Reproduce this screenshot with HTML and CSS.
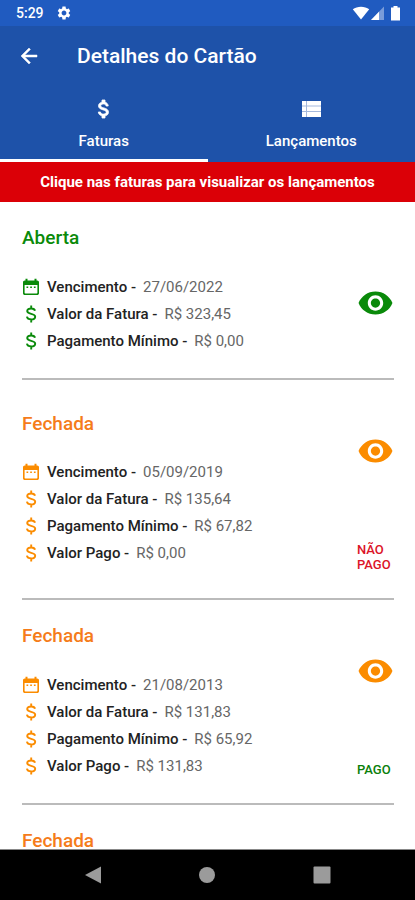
FILE: index.html
```html
<!DOCTYPE html>
<html lang="pt-BR">
<head>
<meta charset="utf-8">
<meta name="viewport" content="width=device-width, initial-scale=1">
<title>Detalhes do Cartão</title>
<link rel="stylesheet" href="styles.css">
</head>
<body>
<svg class="sprite" aria-hidden="true">
  <symbol id="money" viewBox="0 0 24 24"><path d="M11.8 10.9c-2.27-.59-3-1.2-3-2.15 0-1.09 1.01-1.85 2.7-1.85 1.78 0 2.44.85 2.5 2.1h2.21c-.07-1.72-1.12-3.3-3.21-3.81V3h-3v2.16c-1.94.42-3.5 1.68-3.5 3.61 0 2.31 1.91 3.46 4.7 4.13 2.5.6 3 1.48 3 2.41 0 .69-.49 1.79-2.7 1.79-2.06 0-2.87-.92-2.98-2.1h-2.2c.12 2.19 1.76 3.42 3.68 3.83V21h3v-2.15c1.95-.37 3.5-1.5 3.5-3.55 0-2.84-2.43-3.81-4.7-4.4z" stroke="currentColor" stroke-width=".8"/></symbol>
  <symbol id="dollar" viewBox="0 0 18 18"><path d="M13 5.800C12.700 4.200 11.300 3.500 9.200 3.500 6.900 3.500 5.200 4.400 5.200 6.100c0 3.900 8 1.700 8 5.700 0 1.800-1.700 2.700-4 2.700-2.400 0-4-1-4.300-2.800M9.200.4v3.100M9.200 14.500v3.100" fill="none" stroke="currentColor" stroke-width="1.900"/></symbol>
  <symbol id="calendar" viewBox="0 0 18 18"><path fill-rule="evenodd" d="M3.500.8h2v1.700h7V.8h2v1.700h.7c1 0 1.800.8 1.800 1.800v10.900c0 1-.8 1.800-1.800 1.800H2.800C1.800 17 1 16.200 1 15.200V4.300c0-1 .8-1.800 1.800-1.800h.7zM2.600 7v7.700c0 .4.300.7.700.7h11.400c.4 0 .7-.3.700-.7V7z"/><path d="M4.500 8.500h1.700v1.500H4.500zM8.200 8.500h1.700v1.500H8.200zM11.900 8.500h1.700v1.500h-1.700z"/></symbol>
  <symbol id="eye" viewBox="0 0 24 24"><path d="M12 4.500C7 4.500 2.730 7.610 1 12c1.730 4.390 6 7.500 11 7.500s9.270-3.110 11-7.500c-1.730-4.390-6-7.500-11-7.500zM12 17c-2.760 0-5-2.240-5-5s2.240-5 5-5 5 2.240 5 5-2.240 5-5 5zm0-8c-1.660 0-3 1.340-3 3s1.340 3 3 3 3-1.340 3-3-1.340-3-3-3z"/></symbol>
</svg>
<div class="app">
  <div class="status-bar">
    <div class="status-group">
      <span>5:29</span>
      <svg class="icon-gear" viewBox="0 0 24 24"><path d="M19.140 12.940c.04-.3.060-.61.060-.94 0-.32-.02-.64-.07-.94l2.030-1.580c.18-.14.230-.41.120-.61l-1.920-3.320c-.12-.22-.37-.29-.59-.22l-2.390.96c-.5-.38-1.030-.7-1.620-.94l-.36-2.540c-.04-.24-.24-.41-.48-.41h-3.840c-.24 0-.43.170-.47.410l-.36 2.540c-.59.240-1.130.57-1.620.94l-2.390-.96c-.22-.08-.47 0-.59.220L2.740 8.870c-.12.210-.08.470.12.610l2.030 1.580c-.05.3-.09.630-.09.940s.02.640.07.940l-2.030 1.580c-.18.140-.23.410-.12.610l1.920 3.320c.12.220.37.290.59.220l2.390-.96c.5.380 1.030.7 1.620.94l.36 2.540c.05.240.24.410.48.410h3.840c.24 0 .44-.17.470-.41l.36-2.540c.59-.24 1.130-.56 1.620-.94l2.390.96c.22.080.47 0 .59-.22l1.920-3.320c.12-.22.070-.47-.12-.61l-2.010-1.580zM12 15.600c-1.980 0-3.600-1.620-3.600-3.600s1.620-3.600 3.600-3.600 3.600 1.620 3.600 3.600-1.620 3.600-3.600 3.600z"/></svg>
    </div>
    <svg class="icon-signals" viewBox="0 0 50 16"><path d="M.8 4.200C5 .8 13 .8 17.200 4.200L9 14.500z"/><path d="M32 1.500V15H19z" opacity=".4"/><path d="M27 6.700V15h-8z"/><path d="M41.500 1h4v1.500H48V15.500h-9V2.500h2.500z"/></svg>
  </div>
  <header class="app-bar">
    <button class="back" aria-label="Voltar"><svg viewBox="0 0 24 24"><path d="M20 11H7.830l5.590-5.590L12 4l-8 8 8 8 1.410-1.410L7.830 13H20z" stroke="currentColor" stroke-width=".5"/></svg></button>
    <h1>Detalhes do Cartão</h1>
  </header>
  <nav class="tabs">
    <a class="tab active" href="#faturas"><svg viewBox="0 0 24 24"><use href="#money"/></svg>Faturas</a>
    <a class="tab" href="#lancamentos"><svg viewBox="0 0 24 24"><path d="M3 4h19v16H3z" opacity=".6"/><path d="M3 4h4v4.500H3zM8 4h14v4.500H8zM3 9.500h4v4.500H3zM8 9.500h14v4.500H8zM3 15h4v5H3zM8 15h14v5H8z"/></svg>Lançamentos</a>
  </nav>
  <p class="notice">Clique nas faturas para visualizar os lançamentos</p>
  <main class="invoices" id="faturas">
    <section class="invoice open">
      <div class="details">
        <h2>Aberta</h2>
        <ul>
          <li><svg><use href="#calendar"/></svg><b>Vencimento -</b><span>27/06/2022</span></li>
          <li><svg><use href="#dollar"/></svg><b>Valor da Fatura -</b><span>R$ 323,45</span></li>
          <li><svg><use href="#dollar"/></svg><b>Pagamento Mínimo -</b><span>R$ 0,00</span></li>
        </ul>
      </div>
      <div class="actions">
        <button aria-label="Visualizar fatura"><svg><use href="#eye"/></svg></button>
      </div>
    </section>
    <section class="invoice">
      <div class="details">
        <h2>Fechada</h2>
        <ul>
          <li><svg><use href="#calendar"/></svg><b>Vencimento -</b><span>05/09/2019</span></li>
          <li><svg><use href="#dollar"/></svg><b>Valor da Fatura -</b><span>R$ 135,64</span></li>
          <li><svg><use href="#dollar"/></svg><b>Pagamento Mínimo -</b><span>R$ 67,82</span></li>
          <li><svg><use href="#dollar"/></svg><b>Valor Pago -</b><span>R$ 0,00</span></li>
        </ul>
      </div>
      <div class="actions">
        <button aria-label="Visualizar fatura"><svg><use href="#eye"/></svg></button>
        <p class="state unpaid">NÃO PAGO</p>
      </div>
    </section>
    <section class="invoice">
      <div class="details">
        <h2>Fechada</h2>
        <ul>
          <li><svg><use href="#calendar"/></svg><b>Vencimento -</b><span>21/08/2013</span></li>
          <li><svg><use href="#dollar"/></svg><b>Valor da Fatura -</b><span>R$ 131,83</span></li>
          <li><svg><use href="#dollar"/></svg><b>Pagamento Mínimo -</b><span>R$ 65,92</span></li>
          <li><svg><use href="#dollar"/></svg><b>Valor Pago -</b><span>R$ 131,83</span></li>
        </ul>
      </div>
      <div class="actions">
        <button aria-label="Visualizar fatura"><svg><use href="#eye"/></svg></button>
        <p class="state paid">PAGO</p>
      </div>
    </section>
    <section class="invoice">
      <div class="details">
        <h2>Fechada</h2>
      </div>
    </section>
  </main>
  <footer class="system-nav">
    <button aria-label="Voltar"><svg viewBox="0 0 18 18"><path d="M17 .5v17L1 9z"/></svg></button>
    <button aria-label="Início"><svg viewBox="0 0 18 18"><circle cx="9" cy="9" r="8"/></svg></button>
    <button aria-label="Recentes"><svg viewBox="0 0 18 18"><rect x=".5" y=".5" width="17" height="17" rx="1"/></svg></button>
  </footer>
</div>
</body>
</html>
```
FILE: styles.css
```css
* {
  box-sizing: border-box;
  margin: 0;
  padding: 0;
}

body {
  font-family: Roboto, "Liberation Sans", sans-serif;
  background: #fff;
  color: #222;
}

svg {
  display: block;
  fill: currentColor;
}

button {
  border: 0;
  background: none;
  color: inherit;
  cursor: pointer;
}

.sprite {
  display: none;
}

.app {
  display: flex;
  flex-direction: column;
  height: 100vh;
}

.status-bar {
  display: flex;
  flex: none;
  align-items: center;
  justify-content: space-between;
  height: 26px;
  padding: 0 13px 0 16px;
  background: #205bc0;
  color: #fff;
  font-size: 14px;
  font-weight: 500;
}

.status-group {
  display: flex;
  align-items: center;
  gap: 12px;
}

.icon-gear {
  width: 16px;
  height: 16px;
}

.icon-signals {
  width: 50px;
  height: 16px;
}

.app-bar {
  display: flex;
  flex: none;
  align-items: center;
  gap: 36px;
  height: 60px;
  padding-left: 17px;
  background: #1e52a9;
  color: #fff;
}

.back svg {
  width: 24px;
  height: 24px;
}

.app-bar h1 {
  font-size: 21px;
  font-weight: 500;
}

.tabs {
  display: flex;
  flex: none;
  background: #1e52a9;
}

.tab {
  display: flex;
  flex: 1;
  flex-direction: column;
  align-items: center;
  gap: 11px;
  padding: 11px 0 9px;
  border-bottom: 3px solid transparent;
  color: #fff;
  font-size: 15px;
  font-weight: 500;
  line-height: 18px;
  text-decoration: none;
}

.tab.active {
  border-bottom-color: #fff;
}

.tab svg {
  width: 24px;
  height: 24px;
}

.notice {
  flex: none;
  padding: 10px 8px;
  background: #db0007;
  color: #fff;
  font-size: 15px;
  font-weight: 700;
  line-height: 20px;
  text-align: center;
}

.invoices {
  flex: 1;
  min-height: 0;
  overflow: hidden;
  padding: 0 21px 0 22px;
}

.invoice {
  display: flex;
  align-items: center;
  justify-content: space-between;
  padding: 25px 0 21px;
  border-bottom: 2px solid #bbb;
  color: #fb8c00;
}

.invoice h2 {
  margin-bottom: 24px;
  color: #f57c1a;
  font-size: 19px;
  font-weight: 500;
  line-height: 22px;
}

.invoice.open,
.invoice.open h2 {
  color: #0a8a0a;
}

.invoice ul {
  padding-bottom: 3px;
  list-style: none;
}

.invoice li {
  display: flex;
  align-items: center;
  height: 27px;
  font-size: 15px;
}

.invoice li svg {
  width: 18px;
  height: 18px;
  margin-right: 7px;
}

.invoice li b {
  margin-right: 7px;
  color: #222;
  font-weight: 500;
}

.invoice li span {
  color: #666;
}

.actions {
  width: 37px;
  padding: 26px 0 5px;
}

.actions svg {
  width: 37px;
  height: 40px;
}

.actions button {
  display: block;
}

.state {
  margin-top: 71px;
  font-size: 13px;
  font-weight: 500;
  line-height: 15px;
}

.unpaid {
  color: #dc1428;
}

.paid {
  color: #0a800a;
}

.system-nav {
  display: flex;
  flex: none;
  align-items: center;
  justify-content: space-around;
  height: 51px;
  padding: 0 36px;
  border-top: 1px solid #888;
  background: #000;
  color: #9b9b9b;
}

.system-nav svg {
  width: 18px;
  height: 18px;
}
```
